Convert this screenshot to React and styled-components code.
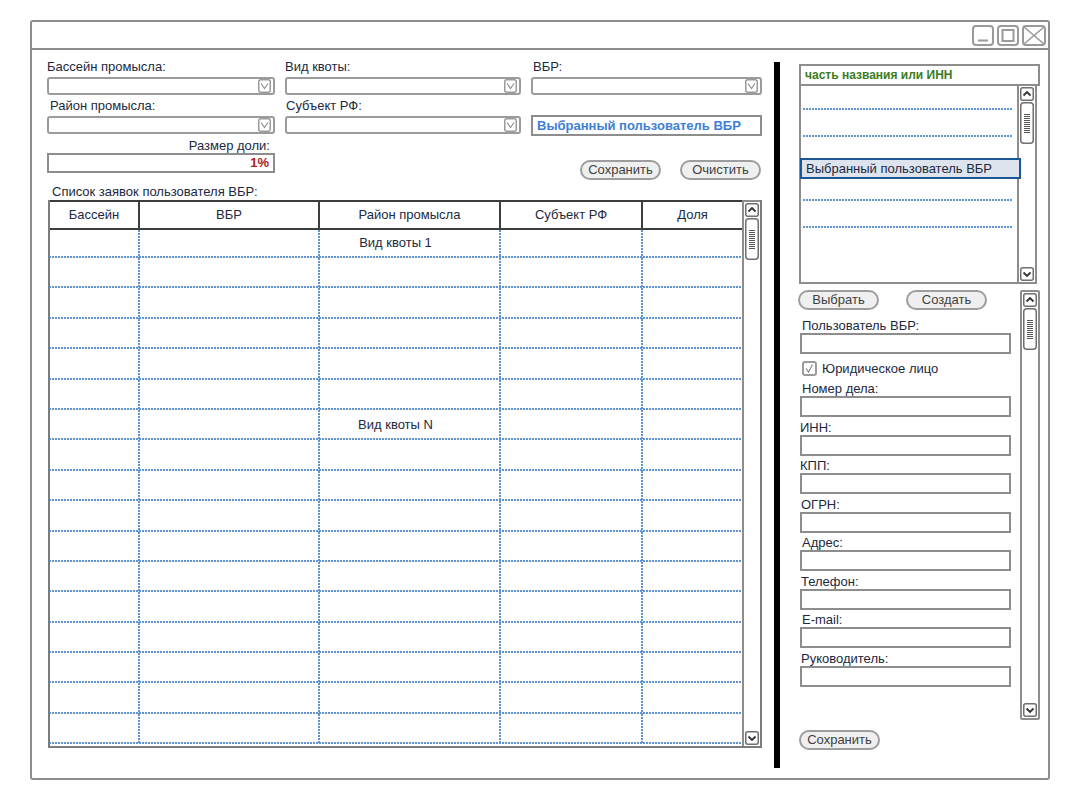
import React from "react";
import styled, { createGlobalStyle } from "styled-components";

const NAVY = "#1c2940";
const FRAME = "#8d8d8d";
const DOT = "#5f95d3";
const COLS = "90px 180px 181px 142px 1fr";

const GlobalStyle = createGlobalStyle`
  * { box-sizing: border-box; }
  body {
    margin: 0;
    background: #fff;
    font-family: "Liberation Sans", Arial, sans-serif;
    color: ${NAVY};
  }
`;

const Page = styled.div`
  padding: 20px 0 0 30px;
`;

const Window = styled.div`
  width: 1020px;
  height: 760px;
  border: 2px solid ${FRAME};
  border-radius: 3px;
  display: flex;
  flex-direction: column;
`;

const TitleBar = styled.div`
  height: 28px;
  flex: none;
  border-bottom: 2px solid ${FRAME};
  display: flex;
  justify-content: flex-end;
  align-items: center;
  gap: 3px;
  padding: 0 2px 0 0;
`;

const Body = styled.div`
  flex: 1;
  display: flex;
  min-height: 0;
`;

const LeftPane = styled.div`
  width: 730px;
  padding: 10px 0 0 15px;
  display: flex;
  flex-direction: column;
`;

const Divider = styled.div`
  width: 6px;
  background: #000;
  margin: 12px 18px 10px 12px;
`;

const RightPane = styled.div`
  width: 242px;
  padding-top: 14px;
  display: flex;
  flex-direction: column;
`;

/* ---------- left form ---------- */

const FormGrid = styled.div`
  display: grid;
  grid-template-columns: 228px 236px 231px;
  column-gap: 10px;
  row-gap: 4.5px;
`;

const Field = styled.div`
  display: flex;
  flex-direction: column;
`;

const Label = styled.div`
  font-size: 13px;
  line-height: 14px;
  height: 14px;
  padding-left: ${(p) => p.$indent || 0}px;
  padding-right: ${(p) => p.$right || 0}px;
  text-align: ${(p) => (p.$align === "right" ? "right" : "left")};
  color: ${NAVY};
  white-space: nowrap;
`;

const SelectBox = styled.div`
  margin-top: 2.5px;
  height: 18px;
  border: 2px solid #9b9b9b;
  border-radius: 3px;
  display: flex;
  justify-content: flex-end;
  align-items: center;
  padding-right: 2px;
`;

const TextField = styled.div`
  height: ${(p) => p.$h || 20}px;
  border: 2px solid ${FRAME};
  font-size: 13px;
  display: flex;
  align-items: center;
  justify-content: ${(p) => (p.$align === "right" ? "flex-end" : "flex-start")};
  padding: 0 4px;
  color: ${(p) => p.$color || NAVY};
  font-weight: ${(p) => (p.$bold ? "bold" : "normal")};
  white-space: nowrap;
`;

const UserField = styled(TextField)`
  margin: 16px 0 -2px 0;
  height: 21px;
  padding-left: 4px;
`;

const ButtonGroup = styled.div`
  grid-column: 3;
  align-self: end;
  margin-bottom: -7px;
  display: flex;
  justify-content: flex-end;
  gap: 19px;
  padding-right: 1px;
`;

const PillButton = styled.button`
  width: 81px;
  height: 20px;
  padding: 0;
  border: 2px solid #9d9d9d;
  border-radius: 10px;
  background: #efefef;
  color: #3f3f3f;
  font-family: "Liberation Sans", Arial, sans-serif;
  font-size: 13px;
  line-height: 16px;
`;

const ListTitle = styled.div`
  margin-top: 12px;
  padding-left: 5px;
  font-size: 13px;
  line-height: 14px;
  color: ${NAVY};
`;

/* ---------- table ---------- */

const TableFrame = styled.div`
  margin: 1px 0 0 1px;
  width: 714px;
  height: 548px;
  border: 2px solid #7c7c7c;
  border-top: none;
  display: flex;
`;

const TableGrid = styled.div`
  flex: 1;
  display: flex;
  flex-direction: column;
  border-top: 2px solid #3d3d3d;
`;

const HeadRow = styled.div`
  display: grid;
  grid-template-columns: ${COLS};
  height: 28px;
  border-bottom: 2px solid #3d3d3d;
`;

const HeadCell = styled.div`
  display: flex;
  align-items: center;
  justify-content: center;
  font-size: 13px;
  color: ${NAVY};
  border-right: ${(p) => (p.$last ? "none" : "2px solid #3d3d3d")};
`;

const BodyRow = styled.div`
  display: grid;
  grid-template-columns: ${COLS};
  height: ${(p) => p.$h}px;
  flex: none;
  background-image: linear-gradient(to right, ${DOT} 62%, transparent 0);
  background-size: 3px 2px;
  background-repeat: repeat-x;
  background-position: 2px bottom;
`;

const BodyCell = styled.div`
  display: flex;
  align-items: center;
  justify-content: center;
  padding: 0 ${(p) => (p.$group ? 30 : 0)}px 2px 0;
  font-size: 13px;
  color: ${NAVY};
  background-image: ${(p) =>
    p.$last ? "none" : `linear-gradient(to bottom, ${DOT} 62%, transparent 0)`};
  background-size: 2px 3px;
  background-repeat: repeat-y;
  background-position: right 0;
`;

const ScrollTrack = styled.div`
  width: ${(p) => p.$w || 18}px;
  flex: none;
  display: flex;
  flex-direction: column;
  align-items: center;
  justify-content: space-between;
  padding: 1px 0;
  border-left: 2px solid ${FRAME};
  border-top: ${(p) => (p.$top ? `2px solid ${FRAME}` : "none")};
`;

const ScrollTop = styled.div`
  display: flex;
  flex-direction: column;
  align-items: center;
  gap: 1px;
`;

/* ---------- right panel ---------- */

const SearchBox = styled.div`
  margin-left: 1px;
  width: 241px;
  height: 22px;
  border: 2px solid ${FRAME};
  padding-left: 4px;
  display: flex;
  align-items: center;
  font-size: 12px;
  font-weight: bold;
  color: #3b7d1e;
`;

const ListBox = styled.div`
  margin-left: 1px;
  width: 238px;
  height: 198px;
  border: 2px solid ${FRAME};
  border-top: none;
  display: flex;
`;

const ListItems = styled.div`
  flex: 1;
  display: flex;
  flex-direction: column;
`;

const ListItem = styled.div`
  height: ${(p) => p.$h}px;
  flex: none;
  margin: 0 4px 0 2px;
  background-image: ${(p) =>
    p.$line ? `linear-gradient(to right, ${DOT} 62%, transparent 0)` : "none"};
  background-size: 3px 2px;
  background-repeat: repeat-x;
  background-position: 0 bottom;
`;

const SelectedItem = styled.div`
  position: relative;
  z-index: 1;
  height: 21px;
  flex: none;
  margin: 0 -4px 0 -1px;
  background: #dde4ee;
  border: 2px solid #1b5795;
  padding-left: 4px;
  display: flex;
  align-items: center;
  font-size: 13px;
  color: ${NAVY};
`;

const FormArea = styled.div`
  margin-top: 6px;
  height: 430px;
  display: flex;
`;

const FormCol = styled.div`
  flex: 1;
  display: flex;
  flex-direction: column;
`;

const ButtonRow = styled.div`
  display: flex;
  gap: 27px;
  margin-bottom: 9px;
`;

const SideScroll = styled.div`
  width: 20px;
  border: 2px solid ${FRAME};
  border-radius: 2px;
  display: flex;
  flex-direction: column;
  align-items: center;
  justify-content: space-between;
  padding: 1px 0;
`;

const SideField = styled.div`
  display: flex;
  flex-direction: column;
  margin-top: ${(p) => p.$mt ?? 3.5}px;
`;

const SideLabel = styled.div`
  font-size: 13px;
  line-height: 14px;
  padding-left: ${(p) => p.$indent ?? 4}px;
  color: ${NAVY};
`;

const SideInput = styled.div`
  margin-left: 2px;
  width: 211px;
  height: 21px;
  border: 2px solid ${FRAME};
`;

const CheckRow = styled.div`
  margin: 7px 0 0 4px;
  height: 15px;
  display: flex;
  align-items: center;
  gap: 5px;
  font-size: 13px;
  color: ${NAVY};
`;

const SaveWrap = styled.div`
  margin: 10px 0 0 1px;
`;

/* ---------- drawings ---------- */

const WinButton = ({ kind }) => (
  <svg width={kind === "close" ? 24 : 22} height="21" viewBox={`0 0 ${kind === "close" ? 24 : 22} 21`}>
    <rect x="1" y="1" width={kind === "close" ? 22 : 20} height="19" rx="3" fill="#fff" stroke="#9a9a9a" strokeWidth="2" />
    {kind === "min" && <line x1="6" y1="15.5" x2="16" y2="15.5" stroke="#9a9a9a" strokeWidth="2" />}
    {kind === "max" && <rect x="5.5" y="5" width="11" height="11" fill="none" stroke="#9a9a9a" strokeWidth="2" />}
    {kind === "close" && (
      <>
        <line x1="2" y1="2" x2="22" y2="19" stroke="#9a9a9a" strokeWidth="1.6" />
        <line x1="22" y1="2" x2="2" y2="19" stroke="#9a9a9a" strokeWidth="1.6" />
      </>
    )}
  </svg>
);

const DropArrow = () => (
  <svg width="13" height="14" viewBox="0 0 13 14">
    <rect x="0.75" y="0.75" width="11.5" height="12.5" rx="2" fill="#fff" stroke="#9b9b9b" strokeWidth="1.5" />
    <polyline points="3,4.5 6.5,9.5 10,4.5" fill="none" stroke="#8a8a8a" strokeWidth="1.1" />
  </svg>
);

const ScrollArrow = ({ up }) => (
  <svg width="14" height="14" viewBox="0 0 14 14">
    <rect x="0.75" y="0.75" width="12.5" height="12.5" rx="2" fill="#fff" stroke="#6f6f6f" strokeWidth="1.5" />
    <polyline
      points={up ? "3.5,8.5 7,5 10.5,8.5" : "3.5,5.5 7,9 10.5,5.5"}
      fill="none"
      stroke="#333"
      strokeWidth="1.8"
    />
  </svg>
);

const Thumb = () => (
  <svg width="14" height="42" viewBox="0 0 14 42">
    <rect x="0.75" y="0.75" width="12.5" height="40.5" rx="3" fill="#fff" stroke="#6f6f6f" strokeWidth="1.5" />
    {[12, 14, 16, 18, 20, 22, 24, 26, 28, 30].map((y) => (
      <line key={y} x1="4" y1={y + 0.5} x2="10" y2={y + 0.5} stroke="#555" strokeWidth="1" />
    ))}
  </svg>
);

const CheckMark = () => (
  <svg width="15" height="15" viewBox="0 0 15 15">
    <rect x="1" y="1" width="13" height="13" rx="2" fill="#fff" stroke="#9b9b9b" strokeWidth="2" />
    <polyline points="4,7.5 6.5,11 10.5,3.5" fill="none" stroke="#8a8a8a" strokeWidth="1.2" />
  </svg>
);

const Scrollbar = () => (
  <>
    <ScrollTop>
      <ScrollArrow up />
      <Thumb />
    </ScrollTop>
    <ScrollArrow />
  </>
);

const Select = () => (
  <SelectBox>
    <DropArrow />
  </SelectBox>
);

const headers = ["Бассейн", "ВБР", "Район промысла", "Субъект РФ", "Доля"];
const rowLabels = { 0: "Вид квоты 1", 6: "Вид квоты N" };
const rows = Array.from({ length: 17 }, (_, i) => i);

const sideFields = [
  ["Номер дела:", 6, 4],
  ["ИНН:", 3.5, 2],
  ["КПП:", 3.5, 2],
  ["ОГРН:", 3.5, 3],
  ["Адрес:", 3.5, 4],
  ["Телефон:", 3.5, 3],
  ["E-mail:", 3.5, 4],
  ["Руководитель:", 3.5, 3],
];

export default function App() {
  return (
    <Page>
      <GlobalStyle />
      <Window>
        <TitleBar>
          <WinButton kind="min" />
          <WinButton kind="max" />
          <WinButton kind="close" />
        </TitleBar>
        <Body>
          <LeftPane>
            <FormGrid>
              <Field>
                <Label>Бассейн промысла:</Label>
                <Select />
              </Field>
              <Field>
                <Label $indent={-2}>Вид квоты:</Label>
                <Select />
              </Field>
              <Field>
                <Label $indent={2}>ВБР:</Label>
                <Select />
              </Field>

              <Field>
                <Label $indent={3}>Район промысла:</Label>
                <Select />
              </Field>
              <Field>
                <Label $indent={1}>Субъект РФ:</Label>
                <Select />
              </Field>
              <UserField $color="#3d7fd6" $bold>
                Выбранный пользователь ВБР
              </UserField>

              <Field>
                <Label $align="right" $right={5}>
                  Размер доли:
                </Label>
                <TextField $align="right" $color="#b0201b" $bold>
                  1%
                </TextField>
              </Field>
              <ButtonGroup>
                <PillButton>Сохранить</PillButton>
                <PillButton>Очистить</PillButton>
              </ButtonGroup>
            </FormGrid>

            <ListTitle>Список заявок пользователя ВБР:</ListTitle>
            <TableFrame>
              <TableGrid>
                <HeadRow>
                  {headers.map((h, i) => (
                    <HeadCell key={h} $last={i === headers.length - 1}>
                      {h}
                    </HeadCell>
                  ))}
                </HeadRow>
                {rows.map((r) => (
                  <BodyRow key={r} $h={r === 0 ? 28.5 : 30.4}>
                    {headers.map((h, i) => (
                      <BodyCell
                        key={h}
                        $last={i === headers.length - 1}
                        $group={i === 2 && rowLabels[r]}
                      >
                        {i === 2 ? rowLabels[r] : null}
                      </BodyCell>
                    ))}
                  </BodyRow>
                ))}
              </TableGrid>
              <ScrollTrack $top>
                <Scrollbar />
              </ScrollTrack>
            </TableFrame>
          </LeftPane>

          <Divider />

          <RightPane>
            <SearchBox>часть названия или ИНН</SearchBox>
            <ListBox>
              <ListItems>
                <ListItem $h={24} $line />
                <ListItem $h={27} $line />
                <ListItem $h={21} />
                <SelectedItem>Выбранный пользователь ВБР</SelectedItem>
                <ListItem $h={22} $line />
                <ListItem $h={27} $line />
              </ListItems>
              <ScrollTrack $w={18}>
                <Scrollbar />
              </ScrollTrack>
            </ListBox>

            <FormArea>
              <FormCol>
                <ButtonRow>
                  <PillButton>Выбрать</PillButton>
                  <PillButton>Создать</PillButton>
                </ButtonRow>
                <SideField $mt={0}>
                  <SideLabel>Пользователь ВБР:</SideLabel>
                  <SideInput />
                </SideField>
                <CheckRow>
                  <CheckMark />
                  Юридическое лицо
                </CheckRow>
                {sideFields.map(([label, mt, indent]) => (
                  <SideField key={label} $mt={mt}>
                    <SideLabel $indent={indent}>{label}</SideLabel>
                    <SideInput />
                  </SideField>
                ))}
              </FormCol>
              <SideScroll>
                <Scrollbar />
              </SideScroll>
            </FormArea>

            <SaveWrap>
              <PillButton>Сохранить</PillButton>
            </SaveWrap>
          </RightPane>
        </Body>
      </Window>
    </Page>
  );
}
